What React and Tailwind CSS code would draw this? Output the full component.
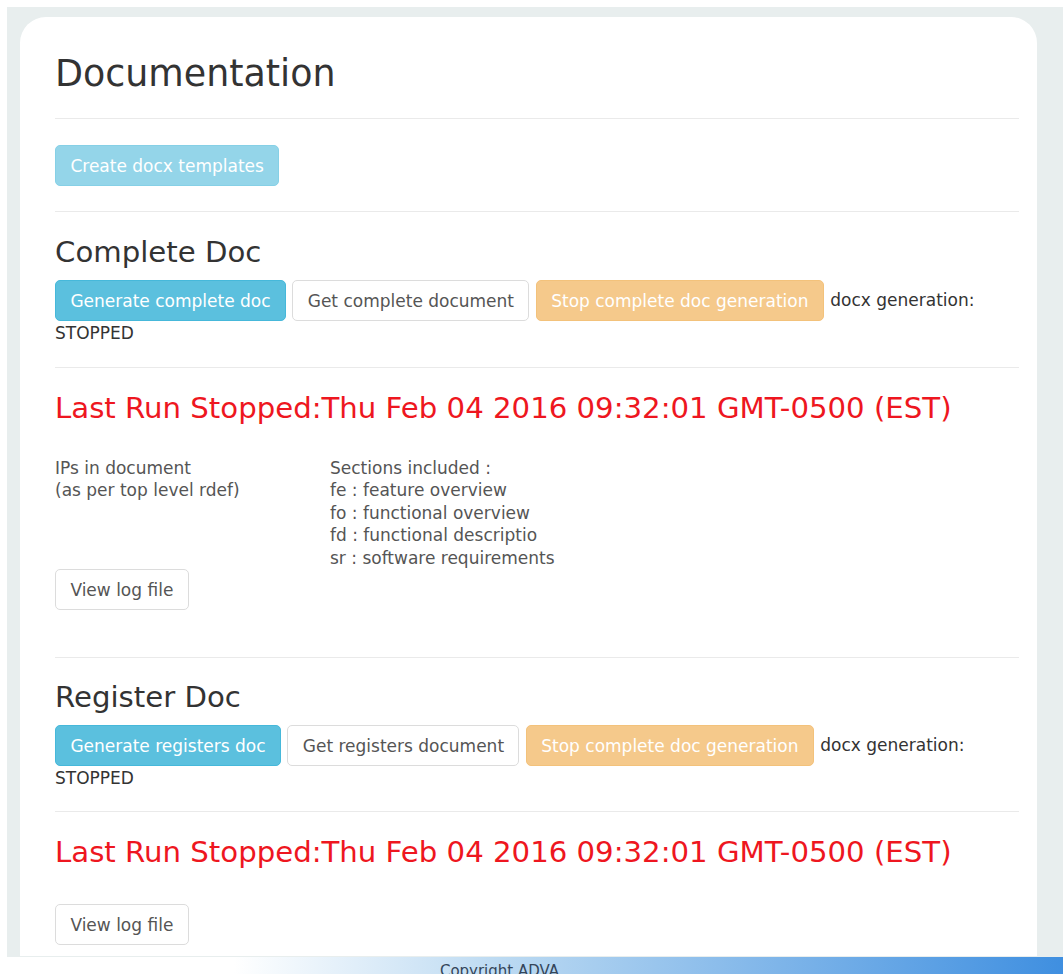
import React from 'react';

const Btn = ({ kind = 'default', disabled, children }) => {
    const styles = {
        info: 'bg-[#5bc0de] border-[#46b8da] text-white',
        default: 'bg-white border-[#dcdcdc] text-[#555]',
        warning: 'bg-[#f0ad4e] border-[#eea236] text-white',
    };
    return (
        <button
            type="button"
            className={`inline-block align-middle mr-[1px] px-[14.4px] py-[7.5px] text-[17px] leading-[24px] border rounded-[5px] ${styles[kind]} ${disabled ? 'opacity-65' : ''}`}
        >
            {children}
        </button>
    );
};

const Rule = ({ className = '' }) => <hr className={`border-0 border-t border-[#eaeaea] ${className}`} />;

const LastRun = ({ className = '' }) => (
    <h3 className={`text-[29.2px] leading-[32px] text-[#ee1620] ${className}`}>
        Last Run Stopped:Thu Feb 04 2016 09:32:01 GMT-0500 (EST)
    </h3>
);

const GenerateRow = ({ generate, get }) => (
    <div className="mt-[12px] text-[17px] leading-[24px] text-[#333]">
        <Btn kind="info">{generate}</Btn>{' '}
        <Btn>{get}</Btn>{' '}
        <Btn kind="warning" disabled>Stop complete doc generation</Btn>{' '}
        docx generation: STOPPED
    </div>
);

export default function App() {
    return (
        <div className="min-h-screen bg-white font-['DejaVu_Sans',sans-serif]">
            <div className="ml-[7px] mt-[7px] bg-[#e8eeee] pl-[13px] pr-[26px] pt-[10px] pb-[1px]">
                <div className="bg-white rounded-t-[26px] pl-[35px] pr-[18px] pt-[37px] pb-[11px]">
                    <h1 className="text-[36.4px] leading-[40px] text-[#333]">Documentation</h1>
                    <Rule className="mt-[24px]" />

                    <div className="mt-[26px]">
                        <Btn kind="info" disabled>Create docx templates</Btn>
                    </div>
                    <Rule className="mt-[25px]" />

                    {/* complete document */}
                    <h3 className="mt-[24px] text-[29.2px] leading-[32px] text-[#333]">Complete Doc</h3>
                    <GenerateRow generate="Generate complete doc" get="Get complete document" />
                    <Rule className="mt-[22px]" />

                    <LastRun className="mt-[24px]" />
                    <div className="mt-[33px] flex text-[17px] leading-[22.4px] text-[#555]">
                        <div className="w-[275px]">
                            <div>IPs in document</div>
                            <div>(as per top level rdef)</div>
                        </div>
                        <div>
                            <div>Sections included :</div>
                            <div>fe : feature overview</div>
                            <div>fo : functional overview</div>
                            <div>fd : functional descriptio</div>
                            <div>sr : software requirements</div>
                        </div>
                    </div>
                    <div>
                        <Btn>View log file</Btn>
                    </div>
                    <Rule className="mt-[47px]" />

                    {/* register document */}
                    <h3 className="mt-[23px] text-[29.2px] leading-[32px] text-[#333]">Register Doc</h3>
                    <GenerateRow generate="Generate registers doc" get="Get registers document" />
                    <Rule className="mt-[21px]" />

                    <LastRun className="mt-[24px]" />
                    <div className="mt-[36px]">
                        <Btn>View log file</Btn>
                    </div>
                </div>
            </div>

            <footer className="h-[40px] flex justify-center pl-[8px] pt-[4px] bg-[linear-gradient(to_right,#ffffff_22%,#bcdaf2_47%,#3f8fe0_100%)]">
                <span className="mr-[72px] text-[15px] leading-[20px] text-[#34465a]">Copyright ADVA</span>
            </footer>
        </div>
    );
}
